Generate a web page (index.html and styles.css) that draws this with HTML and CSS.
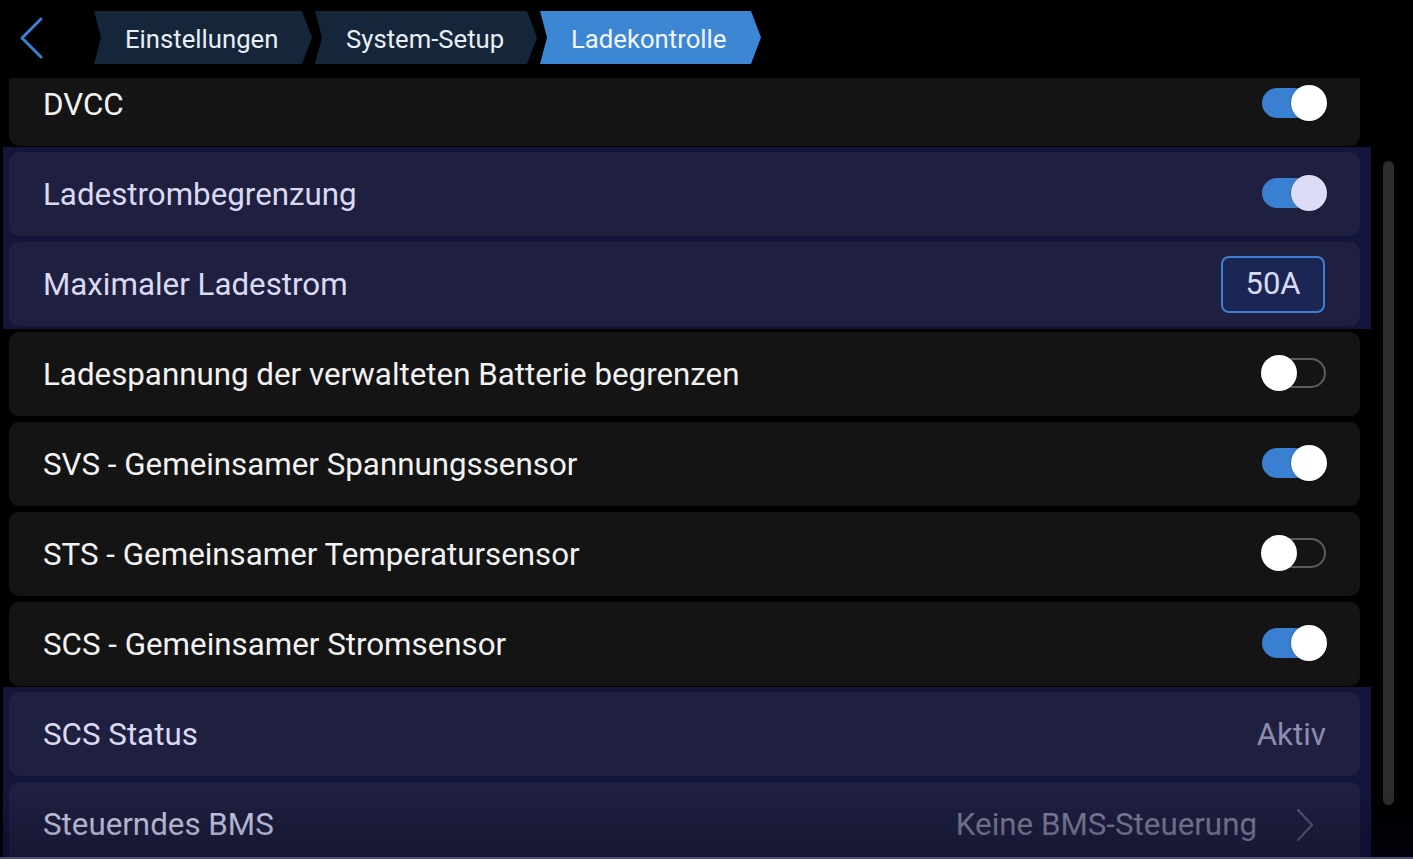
FILE: index.html
```html
<!DOCTYPE html>
<html lang="de">
<head>
<meta charset="utf-8">
<title>Ladekontrolle</title>
<link rel="stylesheet" href="styles.css">
</head>
<body>
<div class="screen">
  <header class="topbar">
    <button class="back" aria-label="Zurück">
      <svg width="26" height="42" viewBox="0 0 26 42"><path d="M23 2 L4 21 L23 40" fill="none" stroke="#3b82d6" stroke-width="3" stroke-linecap="round" stroke-linejoin="round"/></svg>
    </button>
    <nav class="crumbs">
      <span class="crumb">Einstellungen</span>
      <span class="crumb">System-Setup</span>
      <span class="crumb active">Ladekontrolle</span>
    </nav>
  </header>

  <main class="viewport">
    <div class="list">
      <div class="row">
        <span class="label">DVCC</span>
        <span class="toggle on"></span>
      </div>
      <div class="group">
        <div class="row">
          <span class="label">Ladestrombegrenzung</span>
          <span class="toggle on soft"></span>
        </div>
        <div class="row">
          <span class="label">Maximaler Ladestrom</span>
          <span class="valuebox">50A</span>
        </div>
      </div>
      <div class="row">
        <span class="label">Ladespannung der verwalteten Batterie begrenzen</span>
        <span class="toggle"></span>
      </div>
      <div class="row">
        <span class="label">SVS - Gemeinsamer Spannungssensor</span>
        <span class="toggle on"></span>
      </div>
      <div class="row">
        <span class="label">STS - Gemeinsamer Temperatursensor</span>
        <span class="toggle"></span>
      </div>
      <div class="row">
        <span class="label">SCS - Gemeinsamer Stromsensor</span>
        <span class="toggle on"></span>
      </div>
      <div class="group last">
        <div class="row">
          <span class="label">SCS Status</span>
          <span class="value">Aktiv</span>
        </div>
        <div class="row">
          <span class="label">Steuerndes BMS</span>
          <span class="value nav">Keine BMS-Steuerung
            <svg class="chev" width="20" height="34" viewBox="0 0 20 34"><path d="M3 2 L17 17 L3 32" fill="none" stroke="#5b5c7c" stroke-width="2.2" stroke-linecap="round" stroke-linejoin="round"/></svg>
          </span>
        </div>
      </div>
    </div>
    <div class="scrollbar"></div>
    <div class="fade"></div>
  </main>
</div>
</body>
</html>
```

FILE: styles.css
```css
* { box-sizing: border-box; }
html, body {
  margin: 0;
  padding: 0;
  background: #000;
}
body {
  font-family: Roboto, "Noto Sans", "Liberation Sans", sans-serif;
  color: #f2f2f2;
  overflow: hidden;
}
.screen {
  width: 1413px;
  height: 859px;
  display: flex;
  flex-direction: column;
  background: #000;
  position: relative;
  border-bottom: 2px solid #4d4e6e;
}
.topbar {
  height: 78px;
  flex: none;
  display: flex;
  align-items: flex-start;
  padding-top: 11px;
}
.back {
  width: 92px;
  height: 53px;
  background: none;
  border: 0;
  padding: 6px 0 0 18px;
  margin: 0;
  display: flex;
  align-items: flex-start;
  justify-content: flex-start;
}
.crumbs {
  display: flex;
  gap: 1px;
}
.crumb {
  height: 53px;
  display: flex;
  align-items: center;
  padding: 3px 0 0 33px;
  font-size: 25.7px;
  color: #e9eef4;
  background: #15263b;
  clip-path: polygon(2px 0, calc(100% - 10px) 0, 100% 50%, calc(100% - 10px) 100%, 2px 100%, 9px 50%);
  border-radius: 4px;
}
.crumb:first-child { width: 220px; }
.crumb:nth-child(2) { width: 224px; }
.crumb.active {
  width: 223px;
  background: #3d86d4;
  color: #f1f6fc;
}

.viewport {
  flex: 1;
  position: relative;
  overflow: hidden;
}
.list {
  margin-top: -16px;
  padding-left: 9px;
  width: 1360px;
  display: flex;
  flex-direction: column;
  gap: 6px;
}
.row {
  height: 84px;
  flex: none;
  border-radius: 10px;
  background: #141414;
  display: flex;
  align-items: center;
  justify-content: space-between;
  padding: 0 34px 0 34px;
}
.label {
  font-size: 31.3px;
}
.group {
  display: flex;
  flex-direction: column;
  gap: 6px;
  background: #14153a;
  margin: -5px -11px -3px -6px;
  padding: 5px 11px 3px 6px;
}
.group.last {
  margin-bottom: 0;
}
.group .row {
  background: #1f2040;
}
.group .label {
  color: #d9daf2;
}

.toggle {
  position: relative;
  width: 64px;
  height: 30px;
  border-radius: 15px;
  border: 2px solid #5d5d5d;
  flex: none;
  margin-top: -3px;
}
.toggle::after {
  content: "";
  position: absolute;
  top: -5px;
  left: -3px;
  width: 36px;
  height: 36px;
  border-radius: 50%;
  background: #ffffff;
  box-shadow: 0 0 2px rgba(0,0,0,0.5);
}
.toggle.on {
  background: #3a80d2;
  border-color: #3a80d2;
}
.toggle.on::after {
  left: auto;
  right: -3px;
}
.toggle.soft::after {
  background: #dcdcf6;
}

.valuebox {
  width: 104px;
  height: 57px;
  border: 2px solid #3b7fd0;
  border-radius: 8px;
  background: #1c2655;
  color: #d9daf2;
  font-size: 31px;
  display: flex;
  align-items: center;
  justify-content: center;
  padding-bottom: 1px;
  margin-right: 1px;
}
.value {
  font-size: 31.3px;
  color: #8c8dab;
  display: flex;
  align-items: center;
}
.value.nav {
  color: #84859f;
  margin-right: 11px;
}
.chev {
  margin-left: 38px;
  margin-top: 2px;
}

.scrollbar {
  position: absolute;
  left: 1383px;
  top: 83px;
  width: 11px;
  height: 644px;
  border-radius: 6px;
  background: #2e2d29;
}
.fade {
  position: absolute;
  left: 0;
  right: 0;
  bottom: 0;
  height: 70px;
  background: linear-gradient(to bottom, rgba(0,0,20,0), rgba(5,5,30,0.35));
  pointer-events: none;
}
```
